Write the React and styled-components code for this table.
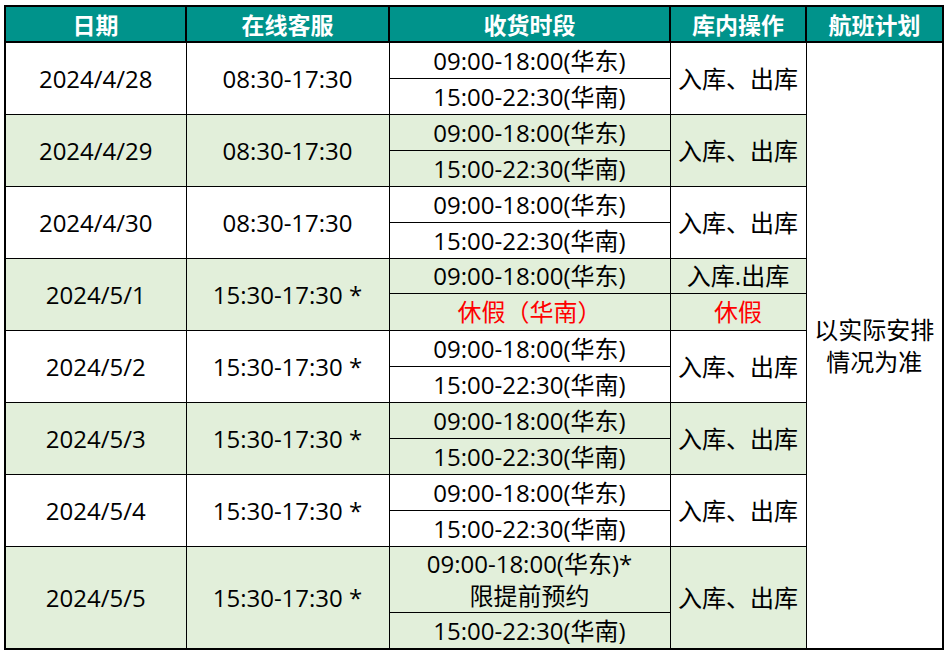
import React from 'react';
import styled, { createGlobalStyle } from 'styled-components';

const GlobalStyle = createGlobalStyle`
  html, body {
    margin: 0;
    padding: 0;
    background: #ffffff;
  }
  body {
    font-family: "Open Sans", "Noto Sans CJK SC", sans-serif;
    color: #000;
  }
`;

// schedule data
const rows = [
  { date: '2024/4/28', service: '08:30-17:30', green: false },
  { date: '2024/4/29', service: '08:30-17:30', green: true },
  { date: '2024/4/30', service: '08:30-17:30', green: false },
  { date: '2024/5/1', service: '15:30-17:30 *', green: true, holiday: true },
  { date: '2024/5/2', service: '15:30-17:30 *', green: false },
  { date: '2024/5/3', service: '15:30-17:30 *', green: true },
  { date: '2024/5/4', service: '15:30-17:30 *', green: false },
  { date: '2024/5/5', service: '15:30-17:30 *', green: true, booking: true },
];

const Schedule = () => {
  return (
    <Page>
      <Table>
        <colgroup>
          <col style={{ width: 181 }} />
          <col style={{ width: 203 }} />
          <col style={{ width: 281 }} />
          <col style={{ width: 136 }} />
          <col style={{ width: 137 }} />
        </colgroup>
        <thead>
          <tr>
            <Th>日期</Th>
            <Th>在线客服</Th>
            <Th>收货时段</Th>
            <Th>库内操作</Th>
            <Th>航班计划</Th>
          </tr>
        </thead>
        <tbody>
          {rows.map((r, i) => (
            <React.Fragment key={r.date}>
              <tr>
                <Td rowSpan={2} $green={r.green}>{r.date}</Td>
                <Td rowSpan={2} $green={r.green}>{r.service}</Td>
                {r.booking ? (
                  <Td $green={r.green} $h={65} $tight>
                    09:00-18:00(华东)*<br />限提前预约
                  </Td>
                ) : (
                  <Td $green={r.green} $h={r.holiday ? 34 : 35}>09:00-18:00(华东)</Td>
                )}
                {r.holiday ? (
                  <Td $green={r.green}>入库.出库</Td>
                ) : (
                  <Td rowSpan={2} $green={r.green}>入库、出库</Td>
                )}
                {i === 0 && <Plan rowSpan={16}>以实际安排<br />情况为准</Plan>}
              </tr>
              <tr>
                {r.holiday ? (
                  <>
                    <Td $green={r.green} $h={36} $red>休假（华南）</Td>
                    <Td $green={r.green} $red>休假</Td>
                  </>
                ) : (
                  <Td $green={r.green} $h={35}>15:00-22:30(华南)</Td>
                )}
              </tr>
            </React.Fragment>
          ))}
        </tbody>
      </Table>
    </Page>
  );
};

const Page = styled.div`
  padding: 5px 0 0 4px;
`;

const Table = styled.table`
  border-collapse: collapse;
  table-layout: fixed;
  width: 939px;
  border: 2px solid #000;
`;

const Th = styled.th`
  height: 34px;
  padding: 0;
  background: #00938b;
  color: #fff;
  font-family: "Noto Sans CJK SC", sans-serif;
  font-weight: 700;
  font-size: 23px;
  line-height: 24px;
  border: 2px solid #000;
  text-align: center;
  vertical-align: middle;
`;

const Td = styled.td`
  height: ${(p) => (p.$h ? `${p.$h}px` : 'auto')};
  padding: 0;
  background: ${(p) => (p.$green ? '#e2efda' : '#ffffff')};
  color: ${(p) => (p.$red ? '#ff0000' : '#000')};
  font-size: 24px;
  line-height: ${(p) => (p.$tight ? '32px' : '24px')};
  border: 1px solid #000;
  text-align: center;
  vertical-align: middle;
  white-space: nowrap;
`;

const Plan = styled.td`
  padding: 0;
  background: #fff;
  font-size: 24px;
  line-height: 32px;
  border: 1px solid #000;
  text-align: center;
  vertical-align: middle;
`;

export default function App() {
  return (
    <>
      <GlobalStyle />
      <Schedule />
    </>
  );
}
